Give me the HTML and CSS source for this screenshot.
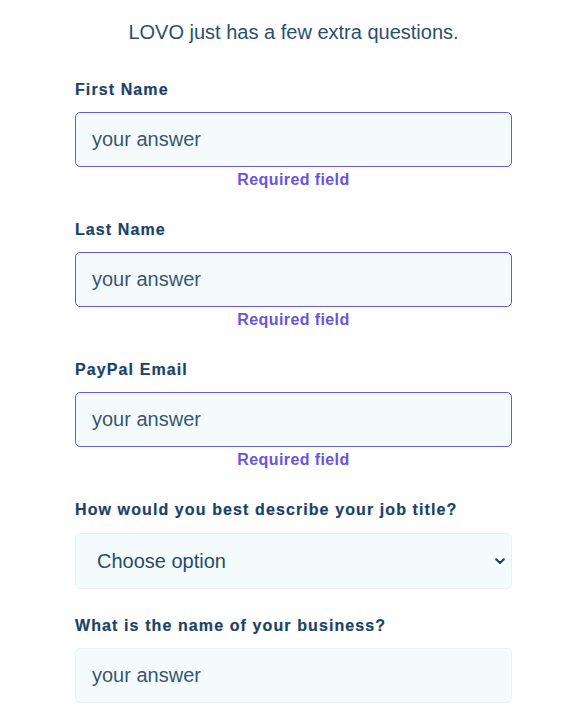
FILE: index.html
```html
<!DOCTYPE html>
<html lang="en">
<head>
<meta charset="utf-8">
<title>LOVO questions</title>
<link rel="stylesheet" href="styles.css">
</head>
<body>
<form class="form">
  <p class="title">LOVO just has a few extra questions.</p>

  <div class="field field-error">
    <label class="label" for="fn">First Name</label>
    <input class="input input-invalid" id="fn" type="text" placeholder="your answer">
    <div class="error">Required field</div>
  </div>

  <div class="field field-error">
    <label class="label" for="ln">Last Name</label>
    <input class="input input-invalid" id="ln" type="text" placeholder="your answer">
    <div class="error">Required field</div>
  </div>

  <div class="field field-error">
    <label class="label" for="pe">PayPal Email</label>
    <input class="input input-invalid" id="pe" type="text" placeholder="your answer">
    <div class="error">Required field</div>
  </div>

  <div class="field field-select">
    <label class="label" for="jt">How would you best describe your job title?</label>
    <div class="select-wrap">
      <select class="select" id="jt">
        <option>Choose option</option>
      </select>
      <svg class="chevron" width="10" height="7" viewBox="0 0 10 7" aria-hidden="true">
        <path d="M1.2 1.2 L5 5 L8.8 1.2" fill="none" stroke="#1f3d5c" stroke-width="2" stroke-linecap="round" stroke-linejoin="round"/>
      </svg>
    </div>
  </div>

  <div class="field">
    <label class="label" for="bn">What is the name of your business?</label>
    <input class="input" id="bn" type="text" placeholder="your answer">
  </div>
</form>
</body>
</html>
```

FILE: styles.css
```css
html, body {
  margin: 0;
  padding: 0;
  background: #ffffff;
}

body {
  font-family: "Liberation Sans", Arial, sans-serif;
}

.form {
  width: 437px;
  margin: 0 auto;
  padding-top: 20px;
  display: flex;
  flex-direction: column;
}

.title {
  margin: 0 0 36px;
  text-align: center;
  font-size: 20px;
  line-height: 24px;
  color: #2c4f70;
}

.field {
  display: flex;
  flex-direction: column;
}

.field-error {
  margin-bottom: 30px;
}

.field-select {
  margin-bottom: 27px;
}

.label {
  display: block;
  margin-bottom: 12px;
  font-size: 16px;
  line-height: 20px;
  font-weight: 700;
  letter-spacing: 1.1px;
  color: #1a4268;
  -webkit-text-stroke: 0.2px #1a4268;
}

.field-select .label {
  margin-bottom: 13px;
}

.input {
  box-sizing: border-box;
  width: 100%;
  height: 55px;
  margin: 0;
  padding: 0 16px;
  border: 1px solid #e8f2f6;
  border-radius: 5px;
  background: #f3fbfd;
  font-family: "Liberation Sans", Arial, sans-serif;
  font-size: 20px;
  color: #2d4a66;
  outline: none;
}

.input::placeholder {
  color: #3a5571;
  opacity: 1;
}

.input-invalid {
  border-color: #6a5bd0;
}

.error {
  margin-top: 3px;
  text-align: center;
  font-size: 16px;
  line-height: 20px;
  font-weight: 700;
  letter-spacing: 0.4px;
  color: #6a55e0;
}

.select-wrap {
  position: relative;
}

.select {
  box-sizing: border-box;
  display: block;
  width: 100%;
  height: 56px;
  margin: 0;
  padding: 0 40px 0 21px;
  border: 1px solid #e8f2f6;
  border-radius: 5px;
  background: #f3fbfd;
  font-family: "Liberation Sans", Arial, sans-serif;
  font-size: 20px;
  color: #2d4a66;
  appearance: none;
  -webkit-appearance: none;
  outline: none;
}

.chevron {
  position: absolute;
  right: 7px;
  top: 25px;
  pointer-events: none;
}
```
